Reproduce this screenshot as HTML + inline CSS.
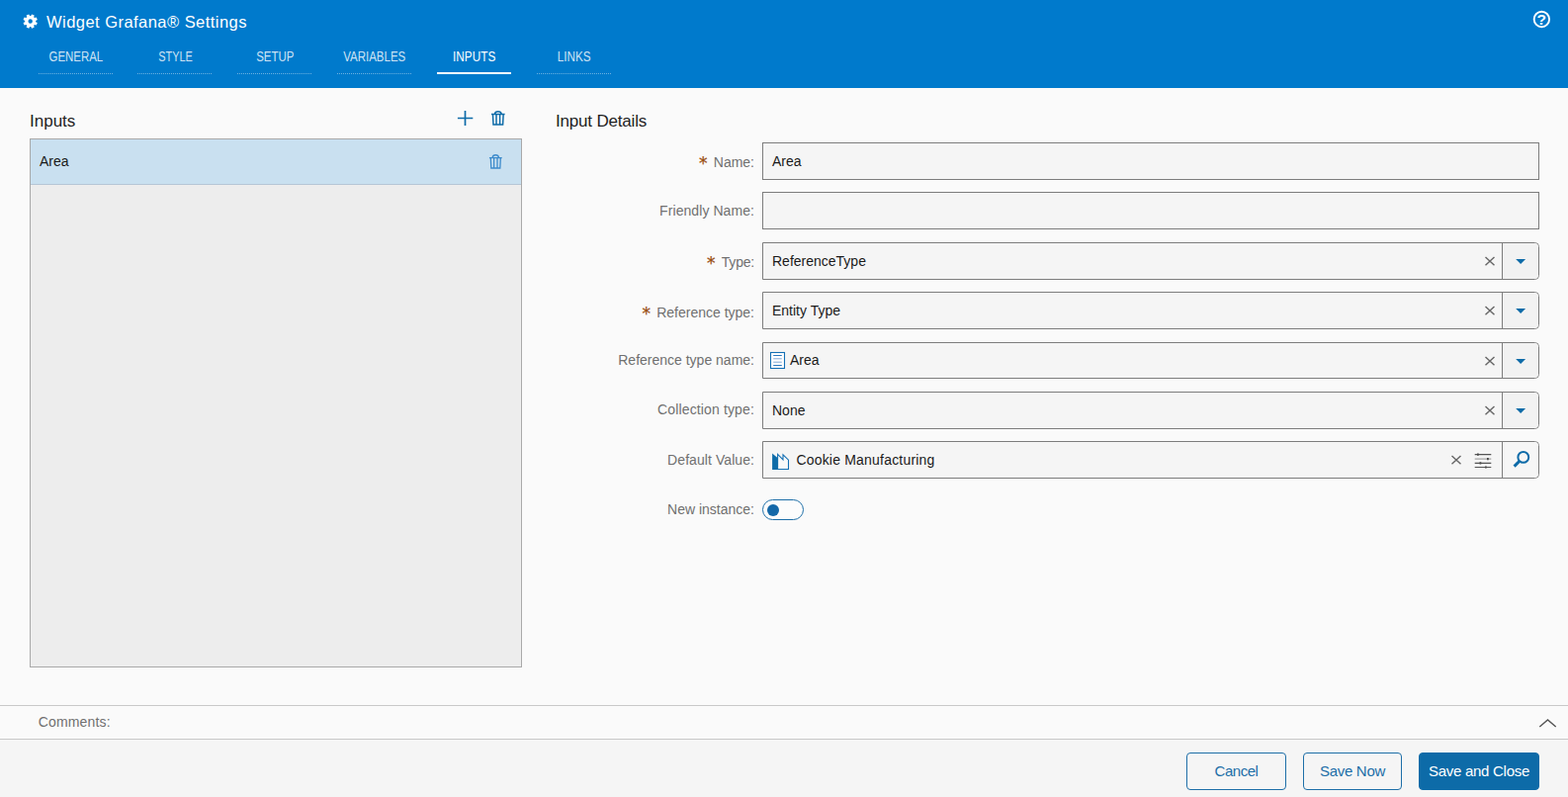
<!DOCTYPE html>
<html lang="en">
<head>
<meta charset="utf-8">
<title>Widget Grafana® Settings</title>
<style>
*{box-sizing:border-box;margin:0;padding:0}
html,body{width:1586px;height:806px;overflow:hidden}
body{position:relative;background:#fafafa;font-family:"Liberation Sans",sans-serif;font-size:14px;color:#1a1a1a}
.abs{position:absolute}
/* header */
#header{position:absolute;left:0;top:0;width:1586px;height:89px;background:#007acc}
#title{position:absolute;left:47px;top:11.500px;font-size:16.500px;line-height:20px;color:#fff;white-space:nowrap;letter-spacing:.46px}
#gear{position:absolute;left:22px;top:13px}
#help{position:absolute;left:1549px;top:9px}
.tab{position:absolute;top:39px;width:75px;height:36px;text-align:center;color:#cfe3f4;font-size:14px;line-height:36px;border-bottom:1px dotted rgba(255,255,255,.42);white-space:nowrap}
.tab span{display:inline-block;transform:scaleX(.84);transform-origin:50% 50%}
.tab.on{color:#fff;border-bottom:2px solid #fff}
/* left */
h2{position:absolute;font-weight:normal;font-size:17px;line-height:20px;color:#1f1f1f;white-space:nowrap}
#list{position:absolute;left:30px;top:140px;width:498px;height:535px;background:#ededed;border:1px solid #a9a9a9}
#item{position:absolute;left:0;top:0;width:496px;height:46px;background:#c9e0f0;border-bottom:1px solid #b5c6d6;line-height:44px;padding-left:9px;color:#1a1a1a}
/* form */
.lbl{position:absolute;right:823px;height:38px;line-height:38px;color:#707070;white-space:nowrap;font-size:14px}
.lbl i{font-style:normal;font-family:"DejaVu Sans","Liberation Sans",sans-serif;color:#9a4e12;-webkit-text-stroke:.25px #9a4e12;font-size:17px;line-height:1;position:absolute;left:-16.5px;top:12.5px;width:12px;text-align:center}
.lbl.req{padding-top:1px}
.inp{position:absolute;left:771px;width:786px;height:38px;background:#f5f5f5;border:1px solid #7d7d7d;line-height:36px;padding-left:9px;white-space:nowrap}
.sel{border-radius:0 4.500px 4.500px 0}
.sel:after{content:"";position:absolute;right:36px;top:0;bottom:0;width:1px;background:#7d7d7d}
.btnbox{position:absolute;right:0;top:0;bottom:0;width:36px;background:#f2f2f2;border-radius:0 4px 4px 0}
.inp svg{position:absolute}
.x{left:729px;top:11.800px}
.tri{left:760px;top:14px}
/* footer */
#cbar{position:absolute;left:0;top:713px;width:1586px;height:35px;border-top:1px solid #c8c8c8;border-bottom:1px solid #c8c8c8;background:#fafafa;line-height:33px;padding-left:38.800px;color:#707070;letter-spacing:.15px}
#foot{position:absolute;left:0;top:748px;width:1586px;height:58px;background:#f5f5f5}
.btn{position:absolute;top:761px;height:38px;border:1px solid #1e6fa8;border-radius:4px;background:#f5f5f5;color:#1e6fa8;font-size:15px;line-height:36px;text-align:center;white-space:nowrap;letter-spacing:-.3px}
.btn.pri{background:#0d6ba8;color:#fff;border-color:#0d6ba8}
</style>
</head>
<body>
<div id="header">
  <svg id="gear" width="17" height="17" viewBox="0 0 17 17"><path transform="translate(.68 .54)" fill="#fff" fill-rule="evenodd" d="M8.60 2.53L9.42 0.84L12.06 1.93L11.44 3.71L12.29 4.56L14.07 3.94L15.16 6.58L13.47 7.40L13.47 8.60L15.16 9.42L14.07 12.06L12.29 11.44L11.44 12.29L12.06 14.07L9.42 15.16L8.60 13.47L7.40 13.47L6.58 15.16L3.94 14.07L4.56 12.29L3.71 11.44L1.93 12.06L0.84 9.42L2.53 8.60L2.53 7.40L0.84 6.58L1.93 3.94L3.71 4.56L4.56 3.71L3.94 1.93L6.58 0.84L7.40 2.53ZM10.20 8.00A2.2 2.2 0 1 0 5.80 8.00A2.2 2.2 0 1 0 10.20 8.00Z"/></svg>
  <div id="title">Widget Grafana® Settings</div>
  <svg id="help" width="21" height="21" viewBox="0 0 21 21"><circle cx="10.370" cy="10.490" r="7.700" fill="none" stroke="#fff" stroke-width="1.900"/><text x="10.200" y="15.600" text-anchor="middle" font-family="Liberation Sans, sans-serif" font-weight="bold" font-size="15.500" fill="#fff">?</text></svg>
  <div class="tab" style="left:39px"><span style="transform:translateX(.4px) scaleX(.816)">GENERAL</span></div>
  <div class="tab" style="left:139px"><span style="transform:translateX(1.3px) scaleX(.78)">STYLE</span></div>
  <div class="tab" style="left:240px"><span style="transform:translateX(.9px) scaleX(.818)">SETUP</span></div>
  <div class="tab" style="left:341px"><span style="transform:translateX(-.7px) scaleX(.822)">VARIABLES</span></div>
  <div class="tab on" style="left:442px"><span>INPUTS</span></div>
  <div class="tab" style="left:543px"><span style="transform:translateX(.5px) scaleX(.835)">LINKS</span></div>
</div>

<h2 style="left:30px;top:113px">Inputs</h2>
<svg class="abs" style="left:462px;top:111px" width="17" height="17" viewBox="0 0 17 17"><path d="M8.500 1v15M.9 8.500h15.400" stroke="#0d6ba8" stroke-width="1.700" fill="none"/></svg>
<svg class="abs" style="left:496px;top:111px" width="16" height="17" viewBox="0 0 16 17"><path d="M1 4.600h13.600M4.400 4.300Q4.800 1.700 7.800 1.700Q10.800 1.700 11.200 4.300M2.500 5l.5 10h9.600l.5-10M6 5v10M9.600 5v10" stroke="#0d6ba8" stroke-width="1.500" fill="none"/></svg>
<div id="list">
  <div id="item">Area
    <svg class="abs" style="left:463.300px;top:14px" width="15" height="17" viewBox="0 0 16 17" preserveAspectRatio="none"><path d="M1 4.600h13.600M4.400 4.300Q4.800 1.700 7.800 1.700Q10.800 1.700 11.200 4.300M2.500 5l.5 10h9.600l.5-10M6 5v10M9.600 5v10" stroke="#3c8acb" stroke-width="1.400" fill="none"/></svg>
  </div>
</div>

<h2 style="left:562px;top:113px;letter-spacing:-.19px">Input Details</h2>

<div class="lbl req" style="top:144px"><i>*</i>Name:</div>
<div class="inp" style="top:144px">Area</div>

<div class="lbl" style="top:194px;letter-spacing:.07px">Friendly Name:</div>
<div class="inp" style="top:194px"></div>

<div class="lbl req" style="top:245px;letter-spacing:-.2px"><i>*</i>Type:</div>
<div class="inp sel" style="top:245px">ReferenceType<div class="btnbox"></div><svg class="x" width="12" height="12" viewBox="0 0 12 12"><path d="M1.500 1.900l9 8.300M10.500 1.900l-9 8.300" stroke="#666" stroke-width="1.400" fill="none"/></svg><svg class="tri" width="12" height="8" viewBox="0 0 12 8"><path d="M1.200 1.900h9.900L6.150 7.100z" fill="#0d6ba8"/></svg></div>

<div class="lbl req" style="top:296px"><i>*</i>Reference type:</div>
<div class="inp sel" style="top:295px">Entity Type<div class="btnbox"></div><svg class="x" width="12" height="12" viewBox="0 0 12 12"><path d="M1.500 1.900l9 8.300M10.500 1.900l-9 8.300" stroke="#666" stroke-width="1.400" fill="none"/></svg><svg class="tri" width="12" height="8" viewBox="0 0 12 8"><path d="M1.200 1.900h9.900L6.150 7.100z" fill="#0d6ba8"/></svg></div>

<div class="lbl" style="top:345px">Reference type name:</div>
<div class="inp sel" style="top:346px;height:37px;line-height:35px;padding-left:27px"><svg style="left:6.100px;top:8.100px" width="17" height="19" viewBox="0 0 17 19"><rect x="1.500" y="1.500" width="14" height="16" fill="#fff" stroke="#1470b4" stroke-width="1.100"/><path d="M4.200 4.500h8.600M4.200 14.500h8.600" stroke="#2a78bf" stroke-width="1"/><path d="M4.200 7.800h8.600M4.200 11.200h8.600" stroke="#7fa9d6" stroke-width="1"/></svg>Area<div class="btnbox"></div><svg class="x" width="12" height="12" viewBox="0 0 12 12"><path d="M1.500 1.900l9 8.300M10.500 1.900l-9 8.300" stroke="#666" stroke-width="1.400" fill="none"/></svg><svg class="tri" width="12" height="8" viewBox="0 0 12 8"><path d="M1.200 1.900h9.900L6.150 7.100z" fill="#0d6ba8"/></svg></div>

<div class="lbl" style="top:395px;letter-spacing:.14px">Collection type:</div>
<div class="inp sel" style="top:396px">None<div class="btnbox"></div><svg class="x" width="12" height="12" viewBox="0 0 12 12"><path d="M1.500 1.900l9 8.300M10.500 1.900l-9 8.300" stroke="#666" stroke-width="1.400" fill="none"/></svg><svg class="tri" width="12" height="8" viewBox="0 0 12 8"><path d="M1.200 1.900h9.900L6.150 7.100z" fill="#0d6ba8"/></svg></div>

<div class="lbl" style="top:446px;letter-spacing:.07px">Default Value:</div>
<div class="inp sel" style="top:446px;padding-left:33.400px"><svg style="left:8px;top:10px" width="20" height="19" viewBox="0 0 20 19"><path d="M6.600 2.400l5.400 5.500V2.800l5.500 5.400v9.250H6.600z" fill="#fafafa" stroke="#1470b4" stroke-width="1.100"/><path d="M1.100 1.500l5.700 4.700v11.800H1.100z" fill="#0d6ba8"/></svg><span style="letter-spacing:.2px">Cookie Manufacturing</span><div class="btnbox" style="background:#f6f6f6"></div><svg style="left:694.500px;top:11.900px" width="12" height="12" viewBox="0 0 12 12"><path d="M1.500 1.900l9 8.300M10.500 1.900l-9 8.300" stroke="#666" stroke-width="1.400" fill="none"/></svg><svg style="left:718px;top:10px" width="20" height="18" viewBox="0 0 20 18"><path d="M1.700 2.600h16.600M1.700 11.400h16.600M1.700 15.500h16.600" stroke="#555" stroke-width="1.100"/><path d="M1.700 7.100h16.600" stroke="#999" stroke-width="1.100"/><path d="M4 2.600h1.800M14 7.100h1.800M6.500 11.400h1.800M12 15.500h1.800" stroke="#4a4a4a" stroke-width="2.200"/></svg><svg style="left:756px;top:7px" width="22" height="22" viewBox="0 0 22 22"><circle cx="12.800" cy="8.400" r="5.400" fill="none" stroke="#0d6ba8" stroke-width="2"/><path d="M8.700 12.500L3.600 17.600" stroke="#0d6ba8" stroke-width="3" fill="none"/></svg></div>

<div class="lbl" style="top:496px">New instance:</div>
<div class="abs" style="left:771px;top:505px;width:42px;height:21px;border:1px solid #1e6fa8;border-radius:11px;background:#fcfcfc"><div class="abs" style="left:4px;top:3.500px;width:12px;height:12px;border-radius:50%;background:#1468a8"></div></div>

<div id="cbar">Comments:<svg class="abs" style="left:1555px;top:11px" width="20" height="12" viewBox="0 0 20 12"><path d="M2.300 10l8.200-7.100L18.700 10" fill="none" stroke="#555" stroke-width="1.400"/></svg></div>
<div id="foot"></div>
<div class="btn" style="left:1200px;width:101px;letter-spacing:-.45px">Cancel</div>
<div class="btn" style="left:1318px;width:100px">Save Now</div>
<div class="btn pri" style="left:1435px;width:122px;letter-spacing:-.27px">Save and Close</div>
</body>
</html>
